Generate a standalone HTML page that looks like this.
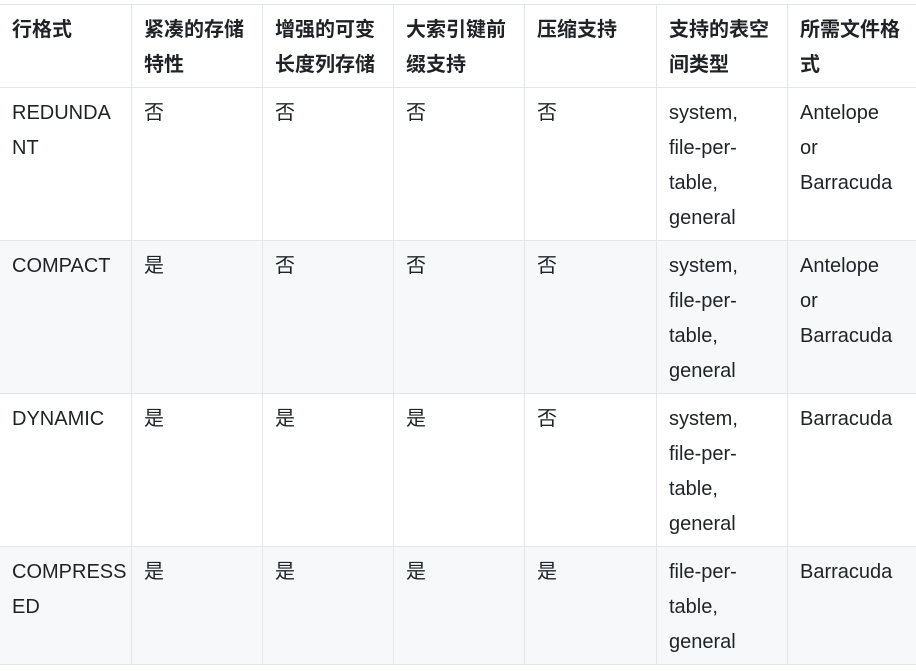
<!DOCTYPE html>
<html><head><meta charset="utf-8"><style>
body{margin:0;background:#fff;width:916px;height:671px;overflow:hidden}
table{position:absolute;left:-1px;top:4px;border-collapse:collapse;table-layout:fixed;width:918px;font-family:"Liberation Sans","Noto Sans CJK SC",sans-serif;font-size:20px;line-height:35px;color:#1f2328}
td,th{border:1px solid #e3e6ea;padding:8px 12px 4px 12px;vertical-align:top;text-align:left;white-space:nowrap;overflow:hidden}
th{font-weight:bold}
tr.g td{background:#f6f8fa}
</style></head><body>
<table>
<colgroup><col style="width:132px"><col style="width:131px"><col style="width:131px"><col style="width:131px"><col style="width:132px"><col style="width:131px"><col style="width:130px"></colgroup>
<tr><th>行格式</th><th>紧凑的存储<br>特性</th><th>增强的可变<br>长度列存储</th><th>大索引键前<br>缀支持</th><th>压缩支持</th><th>支持的表空<br>间类型</th><th>所需文件格<br>式</th></tr>
<tr><td>REDUNDA<br>NT</td><td>否</td><td>否</td><td>否</td><td>否</td><td>system,<br>file-per-<br>table,<br>general</td><td>Antelope<br>or<br>Barracuda</td></tr>
<tr class="g"><td>COMPACT</td><td>是</td><td>否</td><td>否</td><td>否</td><td>system,<br>file-per-<br>table,<br>general</td><td>Antelope<br>or<br>Barracuda</td></tr>
<tr><td>DYNAMIC</td><td>是</td><td>是</td><td>是</td><td>否</td><td>system,<br>file-per-<br>table,<br>general</td><td>Barracuda</td></tr>
<tr class="g"><td>COMPRESS<br>ED</td><td>是</td><td>是</td><td>是</td><td>是</td><td>file-per-<br>table,<br>general</td><td>Barracuda</td></tr>
</table>
</body></html>
